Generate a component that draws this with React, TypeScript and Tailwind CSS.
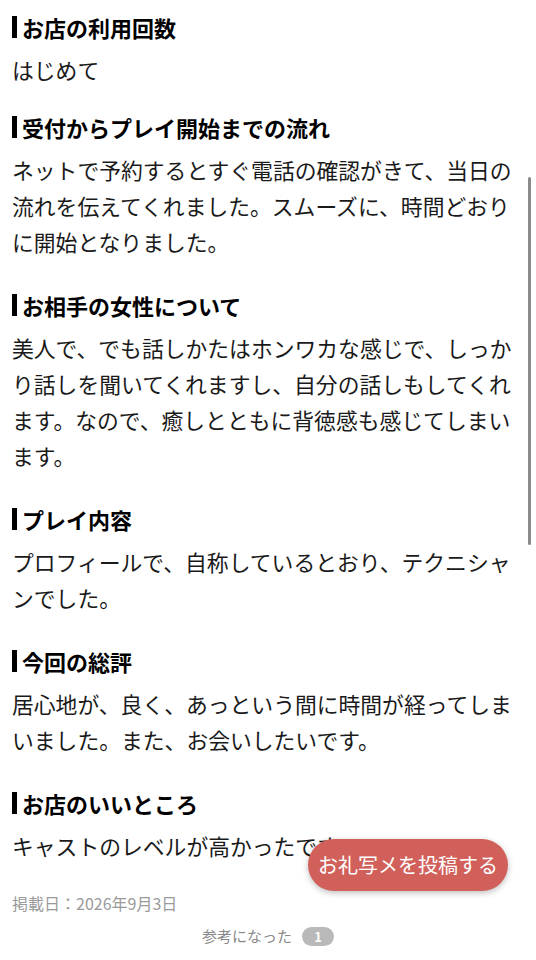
const sections = [
  { title: 'お店の利用回数', body: 'はじめて' },
  {
    title: '受付からプレイ開始までの流れ',
    body: 'ネットで予約するとすぐ電話の確認がきて、当日の流れを伝えてくれました。スムーズに、時間どおりに開始となりました。',
  },
  {
    title: 'お相手の女性について',
    body: '美人で、でも話しかたはホンワカな感じで、しっかり話しを聞いてくれますし、自分の話しもしてくれます。なので、癒しとともに背徳感も感じてしまいます。',
  },
  { title: 'プレイ内容', body: 'プロフィールで、自称しているとおり、テクニシャンでした。' },
  { title: '今回の総評', body: '居心地が、良く、あっという間に時間が経ってしまいました。また、お会いしたいです。' },
  { title: 'お店のいいところ', body: 'キャストのレベルが高かったです。' },
]

export default function App() {
  return (
    <div
      className="relative h-[960px] w-[536px] overflow-hidden bg-white"
      style={{ fontFamily: '"Noto Sans CJK JP", "Noto Sans", sans-serif' }}
    >
      <div className="px-3 pt-[9px]">
        {sections.map((s) => (
          <section className="mb-[27px] first:mb-[21px]" key={s.title}>
            <h3 className="flex items-center text-[22px] font-bold leading-[36px] text-black">
              <span className="mr-[5px] h-[22px] w-[5px] bg-black" />
              {s.title}
            </h3>
            <p className="mt-[7px] text-[21.8px] leading-[36px] text-[#1a1a1a]">{s.body}</p>
          </section>
        ))}
        <p className="mt-0 text-[16px] leading-[24px] text-[#9a9a9a]">掲載日：2026年9月3日</p>
        <div className="mt-[10px] flex items-center justify-center gap-[10px] text-[15px] text-[#888]">
          <span>参考になった</span>
          <span className="flex h-[19px] w-[32px] items-center justify-center rounded-full bg-[#b9b9b9] text-[13px] font-bold leading-none text-white">
            1
          </span>
        </div>
      </div>

      <div className="absolute right-[5px] top-[177px] h-[368px] w-[3px] rounded-full bg-[#8a8a8a]" />

      <button className="absolute left-[308px] top-[839px] flex h-[52px] w-[200px] items-center justify-center rounded-full bg-[#d1605b] text-[20px] text-white shadow-[0_2px_6px_rgba(0,0,0,0.25)]">
        お礼写メを投稿する
      </button>
    </div>
  )
}
